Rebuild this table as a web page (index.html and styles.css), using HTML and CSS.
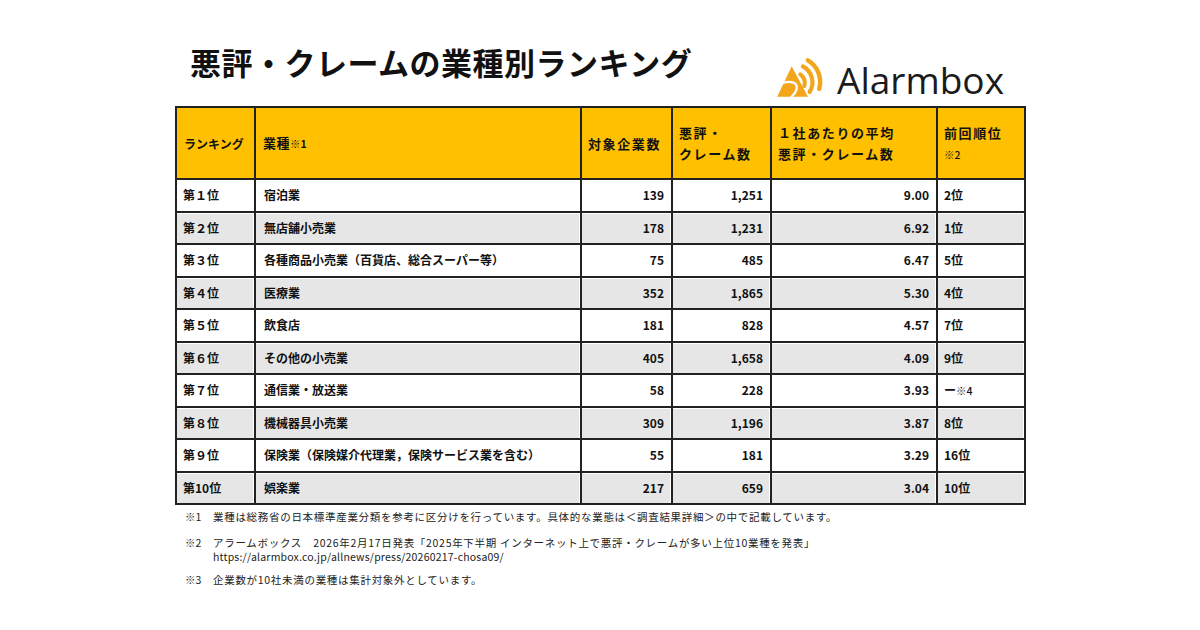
FILE: index.html
```html
<!DOCTYPE html>
<html lang="ja">
<head>
<meta charset="utf-8">
<link rel="stylesheet" href="styles.css">
</head>
<body>
<div class="page">
  <div class="top">
    <h1 class="title">悪評・クレームの業種別ランキング</h1>
    <div class="logo">
      <svg class="logo-icon" width="60" height="50" viewBox="0 0 60 50">
        <polygon points="22.7,11.2 8.2,41.8 39,41.8" fill="#f3a51c"/>
        <path d="M11.5 28.8 C18.5 25.5 28 26.5 27.8 32.5 C27.6 36.5 25 39.5 22 42.2" fill="none" stroke="#fff" stroke-width="2.4"/>
        <path d="M31.3 19.3 A11 11 0 0 1 35.3 31" fill="none" stroke="#f3a51c" stroke-width="4" stroke-linecap="round"/>
        <path d="M33.9 11.4 A18 18 0 0 1 40.6 37" fill="none" stroke="#f3a51c" stroke-width="4.2" stroke-linecap="round"/>
        <path d="M38.9 5.4 A25 25 0 0 1 50.2 33.8" fill="none" stroke="#f3a51c" stroke-width="4.4" stroke-linecap="round"/>
      </svg>
      <span class="logo-text">Alarmbox</span>
    </div>
  </div>

  <table class="rank">
    <colgroup>
      <col class="c-rank"><col class="c-ind"><col class="c-cnt"><col class="c-rev"><col class="c-avg"><col class="c-prev">
    </colgroup>
    <thead>
      <tr>
        <th class="h-rank">ランキング</th>
        <th class="h-ind">業種<span class="mark mark-bold">※1</span></th>
        <th>対象企業数</th>
        <th>悪評・<br>クレーム数</th>
        <th>１社あたりの平均<br>悪評・クレーム数</th>
        <th>前回順位<br><span class="mark">※2</span></th>
      </tr>
    </thead>
    <tbody>
      <tr><td>第１位</td><td class="ind">宿泊業</td><td class="num">139</td><td class="num">1,251</td><td class="num">9.00</td><td>2位</td></tr>
      <tr class="alt"><td>第２位</td><td class="ind">無店舗小売業</td><td class="num">178</td><td class="num">1,231</td><td class="num">6.92</td><td>1位</td></tr>
      <tr><td>第３位</td><td class="ind">各種商品小売業（百貨店、総合スーパー等）</td><td class="num">75</td><td class="num">485</td><td class="num">6.47</td><td>5位</td></tr>
      <tr class="alt"><td>第４位</td><td class="ind">医療業</td><td class="num">352</td><td class="num">1,865</td><td class="num">5.30</td><td>4位</td></tr>
      <tr><td>第５位</td><td class="ind">飲食店</td><td class="num">181</td><td class="num">828</td><td class="num">4.57</td><td>7位</td></tr>
      <tr class="alt"><td>第６位</td><td class="ind">その他の小売業</td><td class="num">405</td><td class="num">1,658</td><td class="num">4.09</td><td>9位</td></tr>
      <tr><td>第７位</td><td class="ind">通信業・放送業</td><td class="num">58</td><td class="num">228</td><td class="num">3.93</td><td>ー<span class="mark">※4</span></td></tr>
      <tr class="alt"><td>第８位</td><td class="ind">機械器具小売業</td><td class="num">309</td><td class="num">1,196</td><td class="num">3.87</td><td>8位</td></tr>
      <tr><td>第９位</td><td class="ind">保険業（保険媒介代理業，保険サービス業を含む）</td><td class="num">55</td><td class="num">181</td><td class="num">3.29</td><td>16位</td></tr>
      <tr class="alt"><td>第10位</td><td class="ind">娯楽業</td><td class="num">217</td><td class="num">659</td><td class="num">3.04</td><td>10位</td></tr>
    </tbody>
  </table>

  <div class="notes">
    <div class="note">
      <span class="note-mark">※1</span>
      <span class="note-text">業種は総務省の日本標準産業分類を参考に区分けを行っています。具体的な業態は＜調査結果詳細＞の中で記載しています。</span>
    </div>
    <div class="note note-2">
      <span class="note-mark">※2</span>
      <span class="note-text">アラームボックス　2026年2月17日発表「2025年下半期 インターネット上で悪評・クレームが多い上位10業種を発表」<br><span class="url">https://alarmbox.co.jp/allnews/press/20260217-chosa09/</span></span>
    </div>
    <div class="note note-3">
      <span class="note-mark">※3</span>
      <span class="note-text">企業数が10社未満の業種は集計対象外としています。</span>
    </div>
  </div>
</div>
</body>
</html>
```

FILE: styles.css
```css
html, body {
  margin: 0;
  padding: 0;
  background: #ffffff;
}

body {
  font-family: "Noto Sans CJK JP", "Noto Sans", sans-serif;
  color: #111111;
}

.page {
  width: 849px;
  margin-left: 175px;
}

.top {
  height: 106px;
  box-sizing: border-box;
  padding-top: 44px;
  display: flex;
  justify-content: space-between;
  align-items: flex-start;
}

.title {
  margin: 0;
  padding-left: 15px;
  font-size: 31px;
  line-height: 36px;
  font-weight: 700;
  letter-spacing: 0.5px;
  color: #111111;
}

.logo {
  display: flex;
  align-items: center;
  margin-right: 20px;
  margin-top: 11px;
}

.logo-icon {
  display: block;
}

.logo-text {
  font-family: "Open Sans", "Noto Sans", sans-serif;
  font-size: 37px;
  line-height: 44px;
  font-weight: 400;
  color: #1b1b1b;
  margin-left: 8px;
  letter-spacing: 0;
}

.rank {
  width: 849px;
  border-collapse: collapse;
  table-layout: fixed;
}

.c-rank { width: 79px; }
.c-ind { width: 326px; }
.c-cnt { width: 91px; }
.c-rev { width: 99px; }
.c-avg { width: 166px; }
.c-prev { width: 88px; }

.rank th,
.rank td {
  border: 2px solid #222222;
  padding: 0 6px;
  vertical-align: middle;
  text-align: left;
  white-space: nowrap;
  overflow: hidden;
}

.rank thead tr {
  height: 72px;
}

.rank th {
  background: #ffc000;
  font-size: 13px;
  line-height: 21px;
  font-weight: 700;
  letter-spacing: 1.6px;
  color: #111111;
}

.rank th.h-rank {
  font-size: 12px;
  letter-spacing: 0;
  padding-left: 7px;
}

.rank th.h-ind {
  padding-left: 7px;
  letter-spacing: 0.5px;
}

.mark {
  font-size: 10.5px;
  font-weight: 500;
  letter-spacing: 0;
}

.mark-bold {
  font-weight: 700;
}

.rank tbody tr {
  height: 32.5px;
}

.rank td {
  font-size: 12px;
  line-height: 16px;
  font-weight: 700;
  padding-left: 6px;
  padding-right: 7px;
}

.rank td.ind {
  padding-left: 8px;
}

.rank td.num {
  text-align: right;
}

.rank tr.alt td {
  background: #e6e6e6;
  box-shadow: inset 0 1px 0 #ffffff, inset -1px 0 0 #ffffff;
}

.notes {
  padding-left: 10px;
  margin-top: 5px;
  font-size: 10.5px;
  line-height: 14px;
  color: #222222;
  letter-spacing: 0.7px;
}

.note {
  display: flex;
}

.note-2 {
  margin-top: 12px;
}

.note-3 {
  margin-top: 9px;
}

.note-mark {
  width: 28px;
  flex: none;
  letter-spacing: 0;
}

.url {
  letter-spacing: 0.2px;
}
```
